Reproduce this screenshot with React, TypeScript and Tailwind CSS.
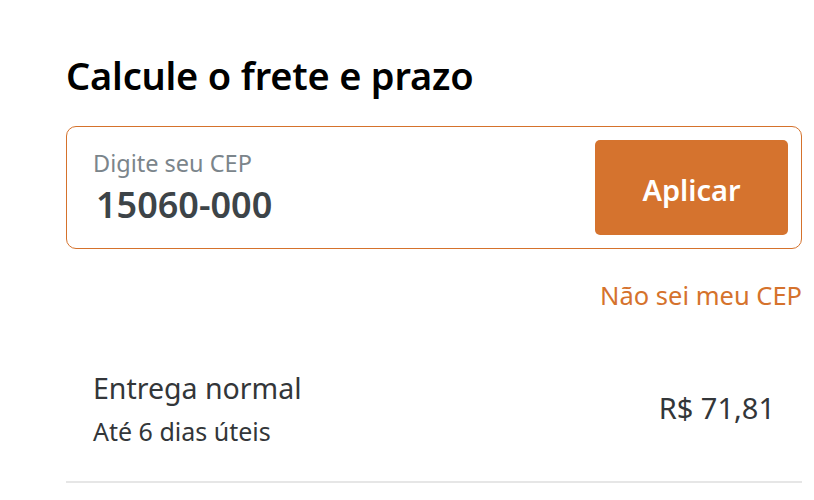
import React from "react";

export default function App() {
  return (
    <div className="w-[814px] h-[500px] bg-white overflow-hidden" style={{ fontFamily: '"Noto Sans", "Open Sans", sans-serif' }}>
      <div className="ml-[66px] w-[736px] pt-[53px]">
        <h1 className="text-[38px] leading-[44px] font-semibold text-black tracking-[-0.2px]">Calcule o frete e prazo</h1>
        <div className="mt-[29px] h-[123px] border-[1.5px] border-[#d5722c] rounded-[10px] flex items-center justify-between pl-[26px] pr-[13px]">
          <div className="flex flex-col">
            <span className="text-[23.5px] leading-[30px] text-[#7b858b]">Digite seu CEP</span>
            <span className="text-[36px] leading-[44px] font-semibold text-[#3d4448] ml-[3px] mt-[5px]">15060-000</span>
          </div>
          <button className="w-[193px] h-[95px] bg-[#d5732e] rounded-[5px] text-white text-[29px] font-semibold pt-[5px]">Aplicar</button>
        </div>
        <div className="flex justify-end mt-[31px]">
          <span className="text-[25.5px] leading-[30px] text-[#d5722c]">Não sei meu CEP</span>
        </div>
        <div className="mt-[59px] flex items-center justify-between pl-[27px] pr-[27px] pb-[34px] border-b-2 border-[#e6e6e6]">
          <div className="flex flex-col">
            <span className="text-[28.5px] leading-[38px] text-[#333639]">Entrega normal</span>
            <span className="text-[25px] leading-[32px] text-[#333639] mt-[8px]">Até 6 dias úteis</span>
          </div>
          <span className="text-[29px] leading-[36px] text-[#333639]">R$ 71,81</span>
        </div>
      </div>
    </div>
  );
}
